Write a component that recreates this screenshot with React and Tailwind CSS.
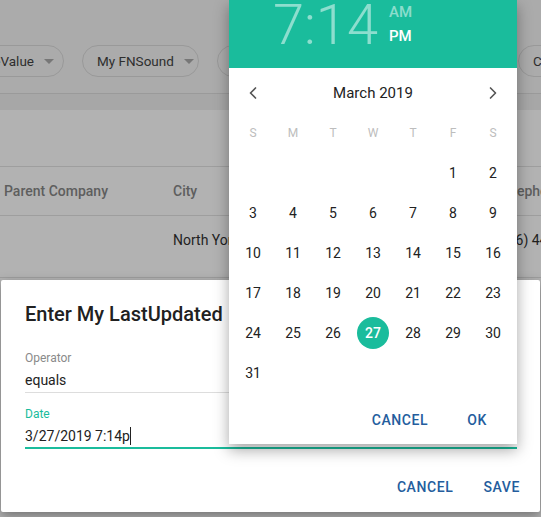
import React from "react";
import { ChevronLeft, ChevronRight } from "lucide-react";

const days = [
  null, null, null, null, null, 1, 2,
  3, 4, 5, 6, 7, 8, 9,
  10, 11, 12, 13, 14, 15, 16,
  17, 18, 19, 20, 21, 22, 23,
  24, 25, 26, 27, 28, 29, 30,
  31,
];

function Chip({ label, className }) {
  return (
    <div
      className={
        "h-8 shrink-0 whitespace-nowrap rounded-full border border-[#999999] flex items-center pl-[14px] pr-[9px] gap-[10px] text-[13.5px] text-[#2e2e2e] " +
        className
      }
    >
      <span>{label}</span>
      <span className="shrink-0 w-0 h-0 border-l-[5px] border-r-[5px] border-t-[5px] border-l-transparent border-r-transparent border-t-[#777777]" />
    </div>
  );
}

function DatePicker() {
  return (
    <div className="absolute left-[229px] top-0 w-[288px] h-[444px] bg-white shadow-[0_6px_14px_rgba(0,0,0,0.35)] flex flex-col">
      <div className="h-[68px] bg-[#1abc9c] flex items-start pl-[44px]">
        <span className="text-[56px] leading-none -mt-[3px] font-light text-white/50">
          7:14
        </span>
        <div className="ml-[11px] flex flex-col text-[15px] leading-[24px] font-medium">
          <span className="text-white/50">AM</span>
          <span className="text-white">PM</span>
        </div>
      </div>
      <div className="h-[50px] flex items-center justify-between px-[14px] text-[#555555]">
        <ChevronLeft size={20} />
        <span className="text-[15px] text-[#222222]">March 2019</span>
        <ChevronRight size={20} />
      </div>
      <div className="h-[30px] grid grid-cols-7 px-[4px] items-center text-[12px] text-[#bdbdbd] text-center">
        {["S", "M", "T", "W", "T", "F", "S"].map((d, i) => (
          <span key={i}>{d}</span>
        ))}
      </div>
      <div className="mt-[5px] grid grid-cols-7 px-[4px] text-[14px] text-[#222222]">
        {days.map((d, i) => (
          <div key={i} className="h-[40px] flex items-center justify-center">
            {d === 27 ? (
              <span className="w-8 h-8 rounded-full bg-[#1abc9c] text-white font-medium flex items-center justify-center">
                27
              </span>
            ) : (
              d
            )}
          </div>
        ))}
      </div>
      <div className="mt-auto h-[48px] flex items-center justify-end pr-[30px] gap-[39px] text-[14px] font-medium tracking-[0.6px] text-[#245d9d]">
        <span>CANCEL</span>
        <span>OK</span>
      </div>
    </div>
  );
}

export default function App() {
  return (
    <div className="relative w-[541px] h-[517px] overflow-hidden bg-[#b2b2b2] font-['Roboto',sans-serif]">
      {/* page behind the dialog */}
      <div className="bg-[#ababab] h-[93px] pt-[45px]">
        <div className="flex gap-[18px] -ml-[40px]">
          <Chip label="SomeValue" className="w-[104px] justify-end" />
          <Chip label="My FNSound" className="w-[117px]" />
          <Chip label="My Company" className="w-[283px]" />
          <Chip label="City" className="w-[80px]" />
        </div>
      </div>
      <div className="h-[17px] border-t border-[#9a9a9a] bg-[#a7a7a7]" />
      <div className="h-[56px]" />
      <div className="border-t border-[#9e9e9e] h-[49px] flex items-center whitespace-nowrap text-[14px] text-[#5e5e5e] font-medium">
        <span className="shrink-0 pl-[4px] w-[173px]">Parent Company</span>
        <span className="shrink-0 w-[325px]">City</span>
        <span className="shrink-0">Telephone</span>
      </div>
      <div className="border-t border-[#9e9e9e] h-[62px] flex items-center whitespace-nowrap text-[14px] text-[#1f1f1f] pb-[12px]">
        <span className="shrink-0 pl-[173px] w-[495px]">North York</span>
        <span className="shrink-0">(416) 445</span>
      </div>
      <div className="border-t border-[#9e9e9e]" />

      {/* dialog */}
      <div className="absolute left-[1px] top-[280px] w-[539px] h-[232px] bg-white rounded-[2px] shadow-[0_4px_12px_rgba(0,0,0,0.35)] flex flex-col">
        <div className="px-6 pt-5">
          <h2 className="text-[20px] leading-7 font-medium text-[#212121]">
            Enter My LastUpdated
          </h2>
          <div className="mt-[22px] w-[492px]">
            <div className="text-[12px] leading-4 text-[#8a8a8a]">Operator</div>
            <div className="mt-1 text-[14px] leading-5 text-[#222222] pb-[2px] border-b border-[#dddddd]">
              equals
            </div>
            <div className="mt-[13px] text-[12px] leading-4 text-[#1abc9c]">Date</div>
            <div className="mt-1 text-[14px] leading-5 text-[#222222] pb-[1px] border-b-2 border-[#1abc9c] flex items-center">
              <span>3/27/2019 7:14p</span>
              <span className="w-px h-[18px] bg-[#222222]" />
            </div>
          </div>
        </div>
        <div className="mt-auto h-[50px] flex items-center justify-end pr-[20px] gap-[30px] text-[14px] font-medium tracking-[0.6px] text-[#245d9d]">
          <span>CANCEL</span>
          <span>SAVE</span>
        </div>
      </div>

      <DatePicker />
    </div>
  );
}
